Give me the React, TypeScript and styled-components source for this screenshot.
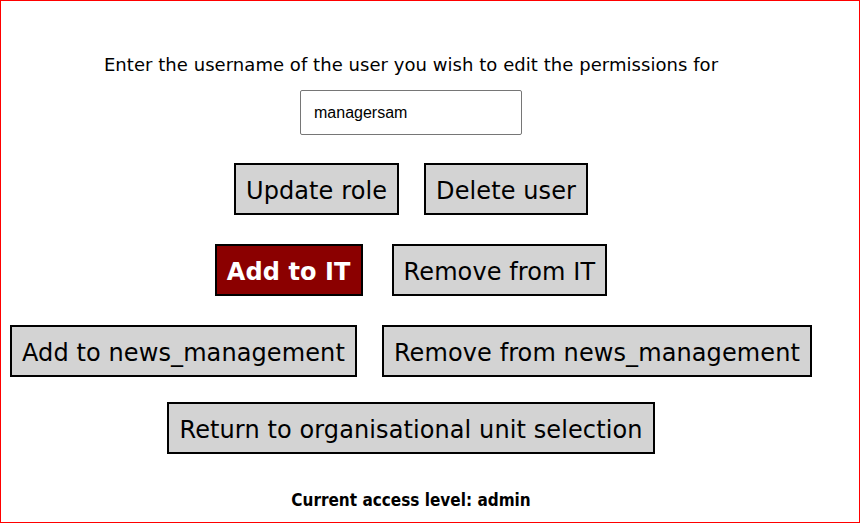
import React from 'react';
import styled, { createGlobalStyle } from 'styled-components';

const GlobalStyle = createGlobalStyle`
  html, body {
    margin: 0;
    padding: 0;
    background: #ffffff;
  }
`;

const Page = styled.div`
  box-sizing: border-box;
  width: 860px;
  height: 523px;
  border: 1px solid #ff0000;
  overflow: hidden;
`;

const Content = styled.div`
  width: 820px;
  display: flex;
  flex-direction: column;
  align-items: center;
  padding-top: 53px;
`;

const Prompt = styled.p`
  margin: 0;
  font-family: 'DejaVu Sans', Verdana, sans-serif;
  font-size: 18px;
  line-height: 21px;
  letter-spacing: 0.05px;
  color: #000000;
`;

const UsernameInput = styled.input`
  box-sizing: border-box;
  width: 222px;
  height: 45px;
  margin-top: 15px;
  padding: 0 13px;
  border: 1px solid #767676;
  border-radius: 2px;
  font-family: 'Liberation Sans', Arial, sans-serif;
  font-size: 16px;
  color: #000000;
  outline: none;
`;

const ButtonRow = styled.div<{ $gap: number; $top: number }>`
  display: flex;
  justify-content: center;
  gap: ${(p) => p.$gap}px;
  margin-top: ${(p) => p.$top}px;
`;

const ActionButton = styled.button<{ $active?: boolean }>`
  box-sizing: border-box;
  height: 52px;
  padding: 12px 10px 8px;
  border: 2px solid #000000;
  border-radius: 0;
  background: ${(p) => (p.$active ? '#8b0000' : '#d3d3d3')};
  color: ${(p) => (p.$active ? '#ffffff' : '#000000')};
  font-family: 'DejaVu Sans', Verdana, sans-serif;
  font-size: 24px;
  font-weight: ${(p) => (p.$active ? 700 : 400)};
  line-height: 28px;
  letter-spacing: 0.1px;
  white-space: nowrap;
  cursor: pointer;
`;

const AccessLevel = styled.p`
  margin: 37px 0 0;
  font-family: 'DejaVu Sans Condensed', 'DejaVu Sans', Tahoma, sans-serif;
  font-size: 17px;
  font-weight: 700;
  line-height: 19px;
  color: #000000;
`;

export default function App() {
  return (
    <Page>
      <GlobalStyle />
      <Content>
        <Prompt>Enter the username of the user you wish to edit the permissions for</Prompt>
        <UsernameInput type='text' defaultValue='managersam' />
        <ButtonRow $gap={25} $top={28}>
          <ActionButton>Update role</ActionButton>
          <ActionButton>Delete user</ActionButton>
        </ButtonRow>
        <ButtonRow $gap={29} $top={29}>
          <ActionButton $active>Add to IT</ActionButton>
          <ActionButton>Remove from IT</ActionButton>
        </ButtonRow>
        <ButtonRow $gap={25} $top={29}>
          <ActionButton>Add to news_management</ActionButton>
          <ActionButton>Remove from news_management</ActionButton>
        </ButtonRow>
        <ButtonRow $gap={25} $top={25}>
          <ActionButton>Return to organisational unit selection</ActionButton>
        </ButtonRow>
        <AccessLevel>Current access level: admin</AccessLevel>
      </Content>
    </Page>
  );
}
